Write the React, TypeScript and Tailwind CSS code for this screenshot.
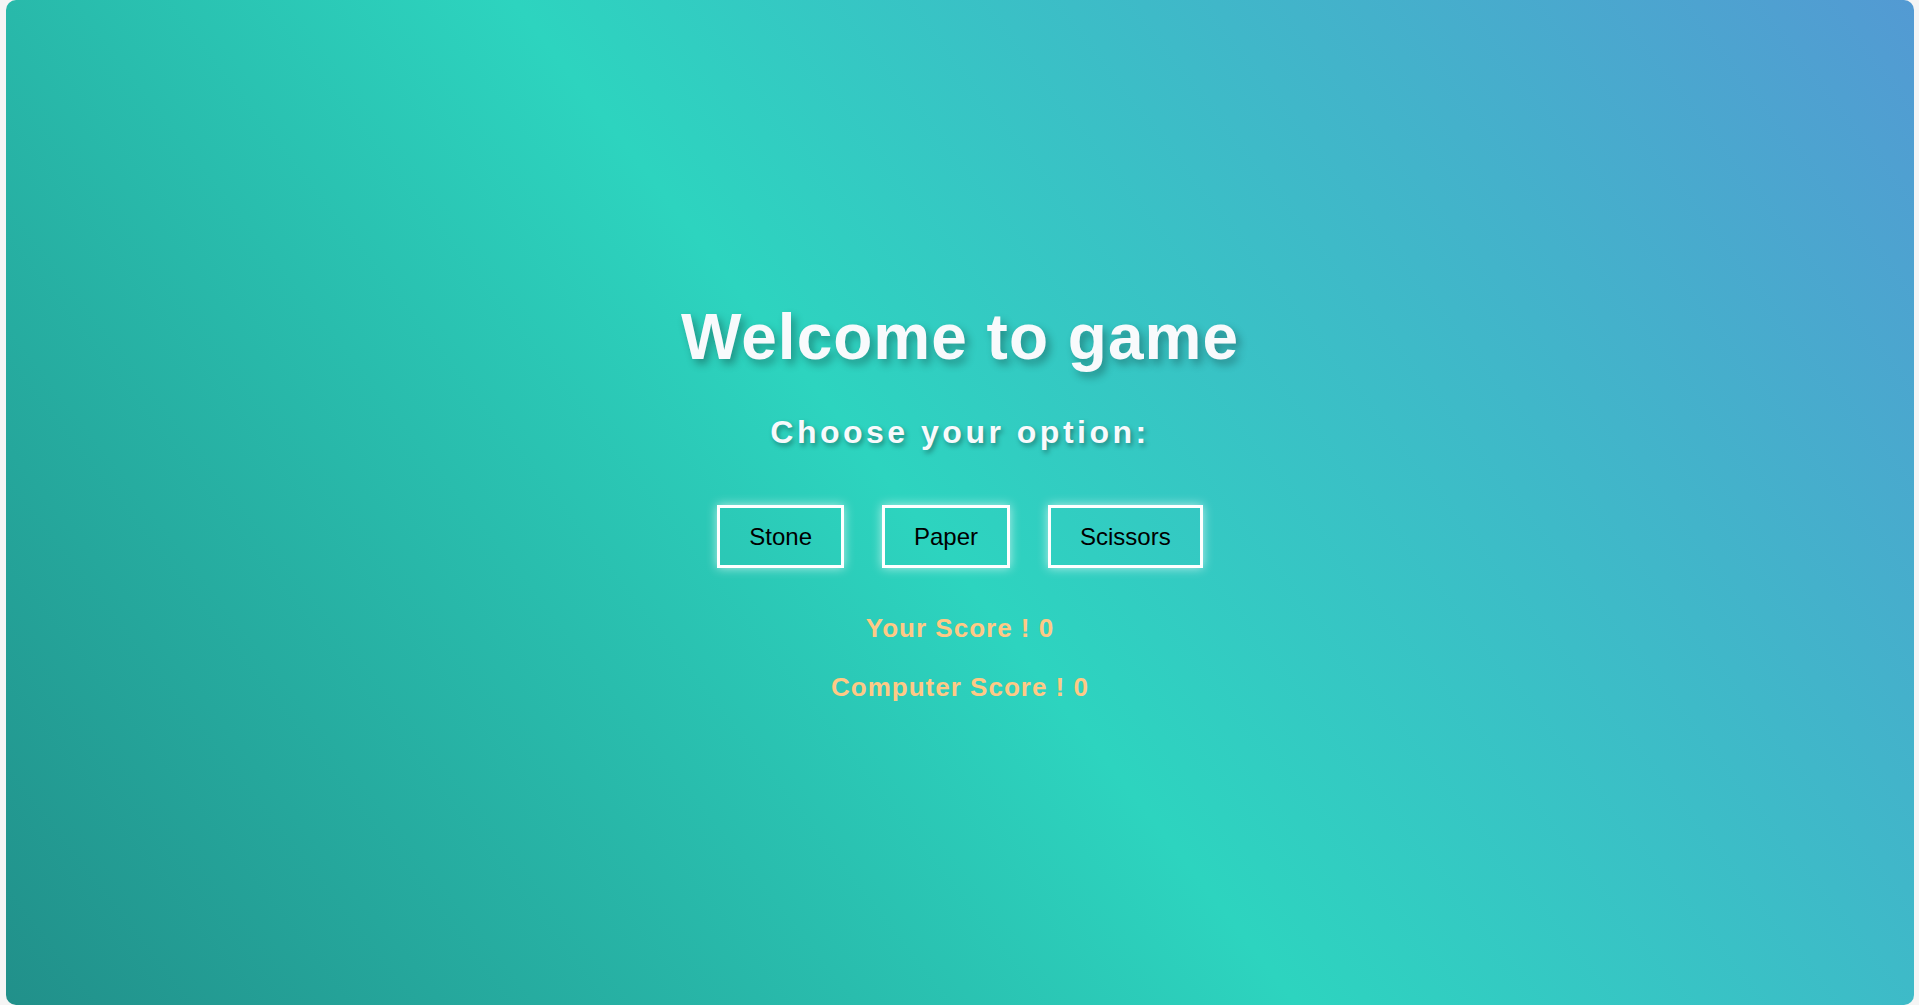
const choices = ['Stone', 'Paper', 'Scissors'];

export default function App() {
  return (
    <div className="h-screen w-full overflow-hidden bg-[#f5f5f5] pl-[6px] pr-[5px] font-['Liberation_Sans',Arial,sans-serif]">
      <main className="flex h-full flex-col items-center justify-center rounded-[10px] bg-[linear-gradient(52deg,#21908a_0%,#2dd4bf_48%,#539ad3_100%)]">
        <h1 className="text-[64px] leading-[64px] font-bold tracking-[1px] text-[#f8fafc] [text-shadow:4px_5px_8px_rgba(0,0,0,0.3)]">
          Welcome to game
        </h1>

        <h2 className="mt-[47px] text-[32px] leading-[32px] font-bold tracking-[3.5px] text-[#f8fafc] [text-shadow:2px_3px_5px_rgba(0,0,0,0.35)]">
          Choose your option:
        </h2>

        <div className="mt-[57px] flex gap-[38px]">
          {choices.map((choice) => (
            <button
              key={choice}
              className="flex h-[63px] items-center border-[3px] border-white bg-transparent px-[29px] text-[24px] text-black shadow-[0_0_10px_rgba(255,255,255,0.65)]"
            >
              {choice}
            </button>
          ))}
        </div>

        <p className="mt-[47px] text-[26px] leading-[26px] font-bold tracking-[1px] text-[#ffc985]">
          Your Score ! 0
        </p>
        <p className="mt-[33px] text-[26px] leading-[26px] font-bold tracking-[1px] text-[#ffc985]">
          Computer Score ! 0
        </p>
      </main>
    </div>
  );
}
